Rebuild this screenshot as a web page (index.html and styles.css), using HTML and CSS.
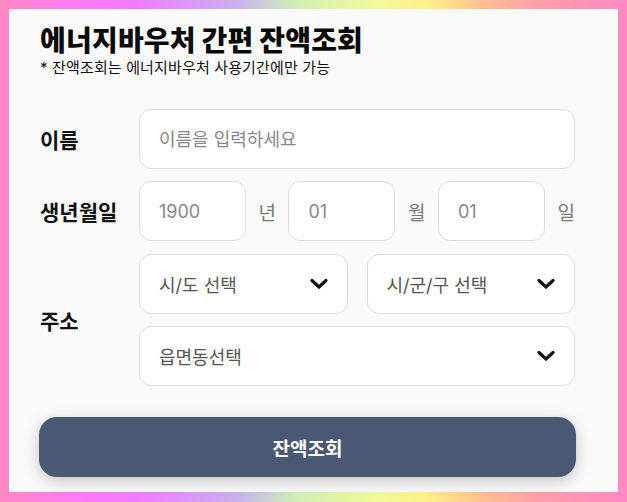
FILE: index.html
```html
<!DOCTYPE html>
<html lang="ko">
<head>
<meta charset="utf-8">
<title>에너지바우처 간편 잔액조회</title>
<link rel="stylesheet" href="styles.css">
</head>
<body>
<div class="frame">
  <div class="card">
    <h1 class="title">에너지바우처 간편 잔액조회</h1>
    <p class="subtitle">* 잔액조회는 에너지바우처 사용기간에만 가능</p>
    <div class="form">
      <div class="row">
        <div class="label">이름</div>
        <input class="field wide" type="text" placeholder="이름을 입력하세요">
      </div>
      <div class="row">
        <div class="label">생년월일</div>
        <div class="birth">
          <input class="field small" type="text" placeholder="1900">
          <span class="unit">년</span>
          <input class="field small" type="text" placeholder="01">
          <span class="unit">월</span>
          <input class="field small" type="text" placeholder="01">
          <span class="unit">일</span>
        </div>
      </div>
      <div class="row row-addr">
        <div class="label">주소</div>
        <div class="addr">
          <div class="addr-top">
            <div class="select"><span>시/도 선택</span><svg class="chev" viewBox="0 0 18 12"><path d="M2 2.5 L9 9 L16 2.5" /></svg></div>
            <div class="select"><span>시/군/구 선택</span><svg class="chev" viewBox="0 0 18 12"><path d="M2 2.5 L9 9 L16 2.5" /></svg></div>
          </div>
          <div class="select"><span>읍면동선택</span><svg class="chev" viewBox="0 0 18 12"><path d="M2 2.5 L9 9 L16 2.5" /></svg></div>
        </div>
      </div>
    </div>
    <button class="submit" type="button">잔액조회</button>
  </div>
</div>
</body>
</html>
```
FILE: styles.css
```css
* { box-sizing: border-box; }
html, body { margin: 0; padding: 0; }
body {
  font-family: "Inter", "Noto Sans CJK KR", "Noto Sans", sans-serif;
  color: #111;
}
.frame {
  width: 627px;
  height: 502px;
  padding: 9px 9px 10px 9px;
  background: linear-gradient(90deg, #ff88c4 0%, #ff7cf4 12%, #f27cff 22%, #c8b2ee 38%, #cfeeb8 47%, #f2fa98 60%, #fff08a 68%, #ffc48e 76%, #ff9eaa 86%, #ff88c4 100%);
}
.card {
  height: 100%;
  background: #fafafa;
  padding: 14px 43px 0 31px;
}
.title {
  margin: 0;
  font-size: 28px;
  font-weight: 900;
  line-height: 36px;
  letter-spacing: 0.2px;
  color: #0a0a0a;
}
.subtitle {
  margin: -1px 0 0 0;
  font-size: 15px;
  line-height: 20px;
  letter-spacing: 0.15px;
  color: #111;
}
.form {
  margin-top: 31px;
  display: flex;
  flex-direction: column;
  gap: 12px;
}
.row {
  display: flex;
  align-items: center;
}
.row-addr { margin-top: 1px; }
.label {
  width: 99px;
  flex: none;
  font-size: 21px;
  font-weight: 700;
  color: #111;
}
.field {
  height: 60px;
  border: 1px solid #dcdcdc;
  border-radius: 12px;
  background: #fff;
  padding: 0 19px;
  font-family: inherit;
  font-size: 18px;
  color: #333;
  outline: none;
}
.field::placeholder { color: #888; }
.wide { flex: 1; min-width: 0; }
.birth {
  flex: 1;
  display: flex;
  align-items: center;
  justify-content: space-between;
}
.small { width: 107px; }
.unit {
  font-size: 19px;
  color: #777;
}
.addr {
  flex: 1;
  display: flex;
  flex-direction: column;
  gap: 12px;
}
.addr-top {
  display: flex;
  gap: 19px;
}
.addr-top .select { flex: 1; }
.select {
  height: 60px;
  border: 1px solid #dcdcdc;
  border-radius: 12px;
  background: #fff;
  padding: 0 19px;
  display: flex;
  align-items: center;
  justify-content: space-between;
  font-size: 18px;
  color: #555;
}
.chev {
  width: 18px;
  height: 12px;
  fill: none;
  stroke: #111;
  stroke-width: 3.2;
  stroke-linecap: round;
  stroke-linejoin: round;
}
.submit {
  display: block;
  margin: 31px 0 0 -1px;
  width: 537px;
  height: 60px;
  border: none;
  border-radius: 18px;
  background: #4b5873;
  color: #fff;
  font-family: inherit;
  font-size: 19px;
  font-weight: 700;
  box-shadow: 0 4px 16px rgba(0,0,0,0.22);
}
```
